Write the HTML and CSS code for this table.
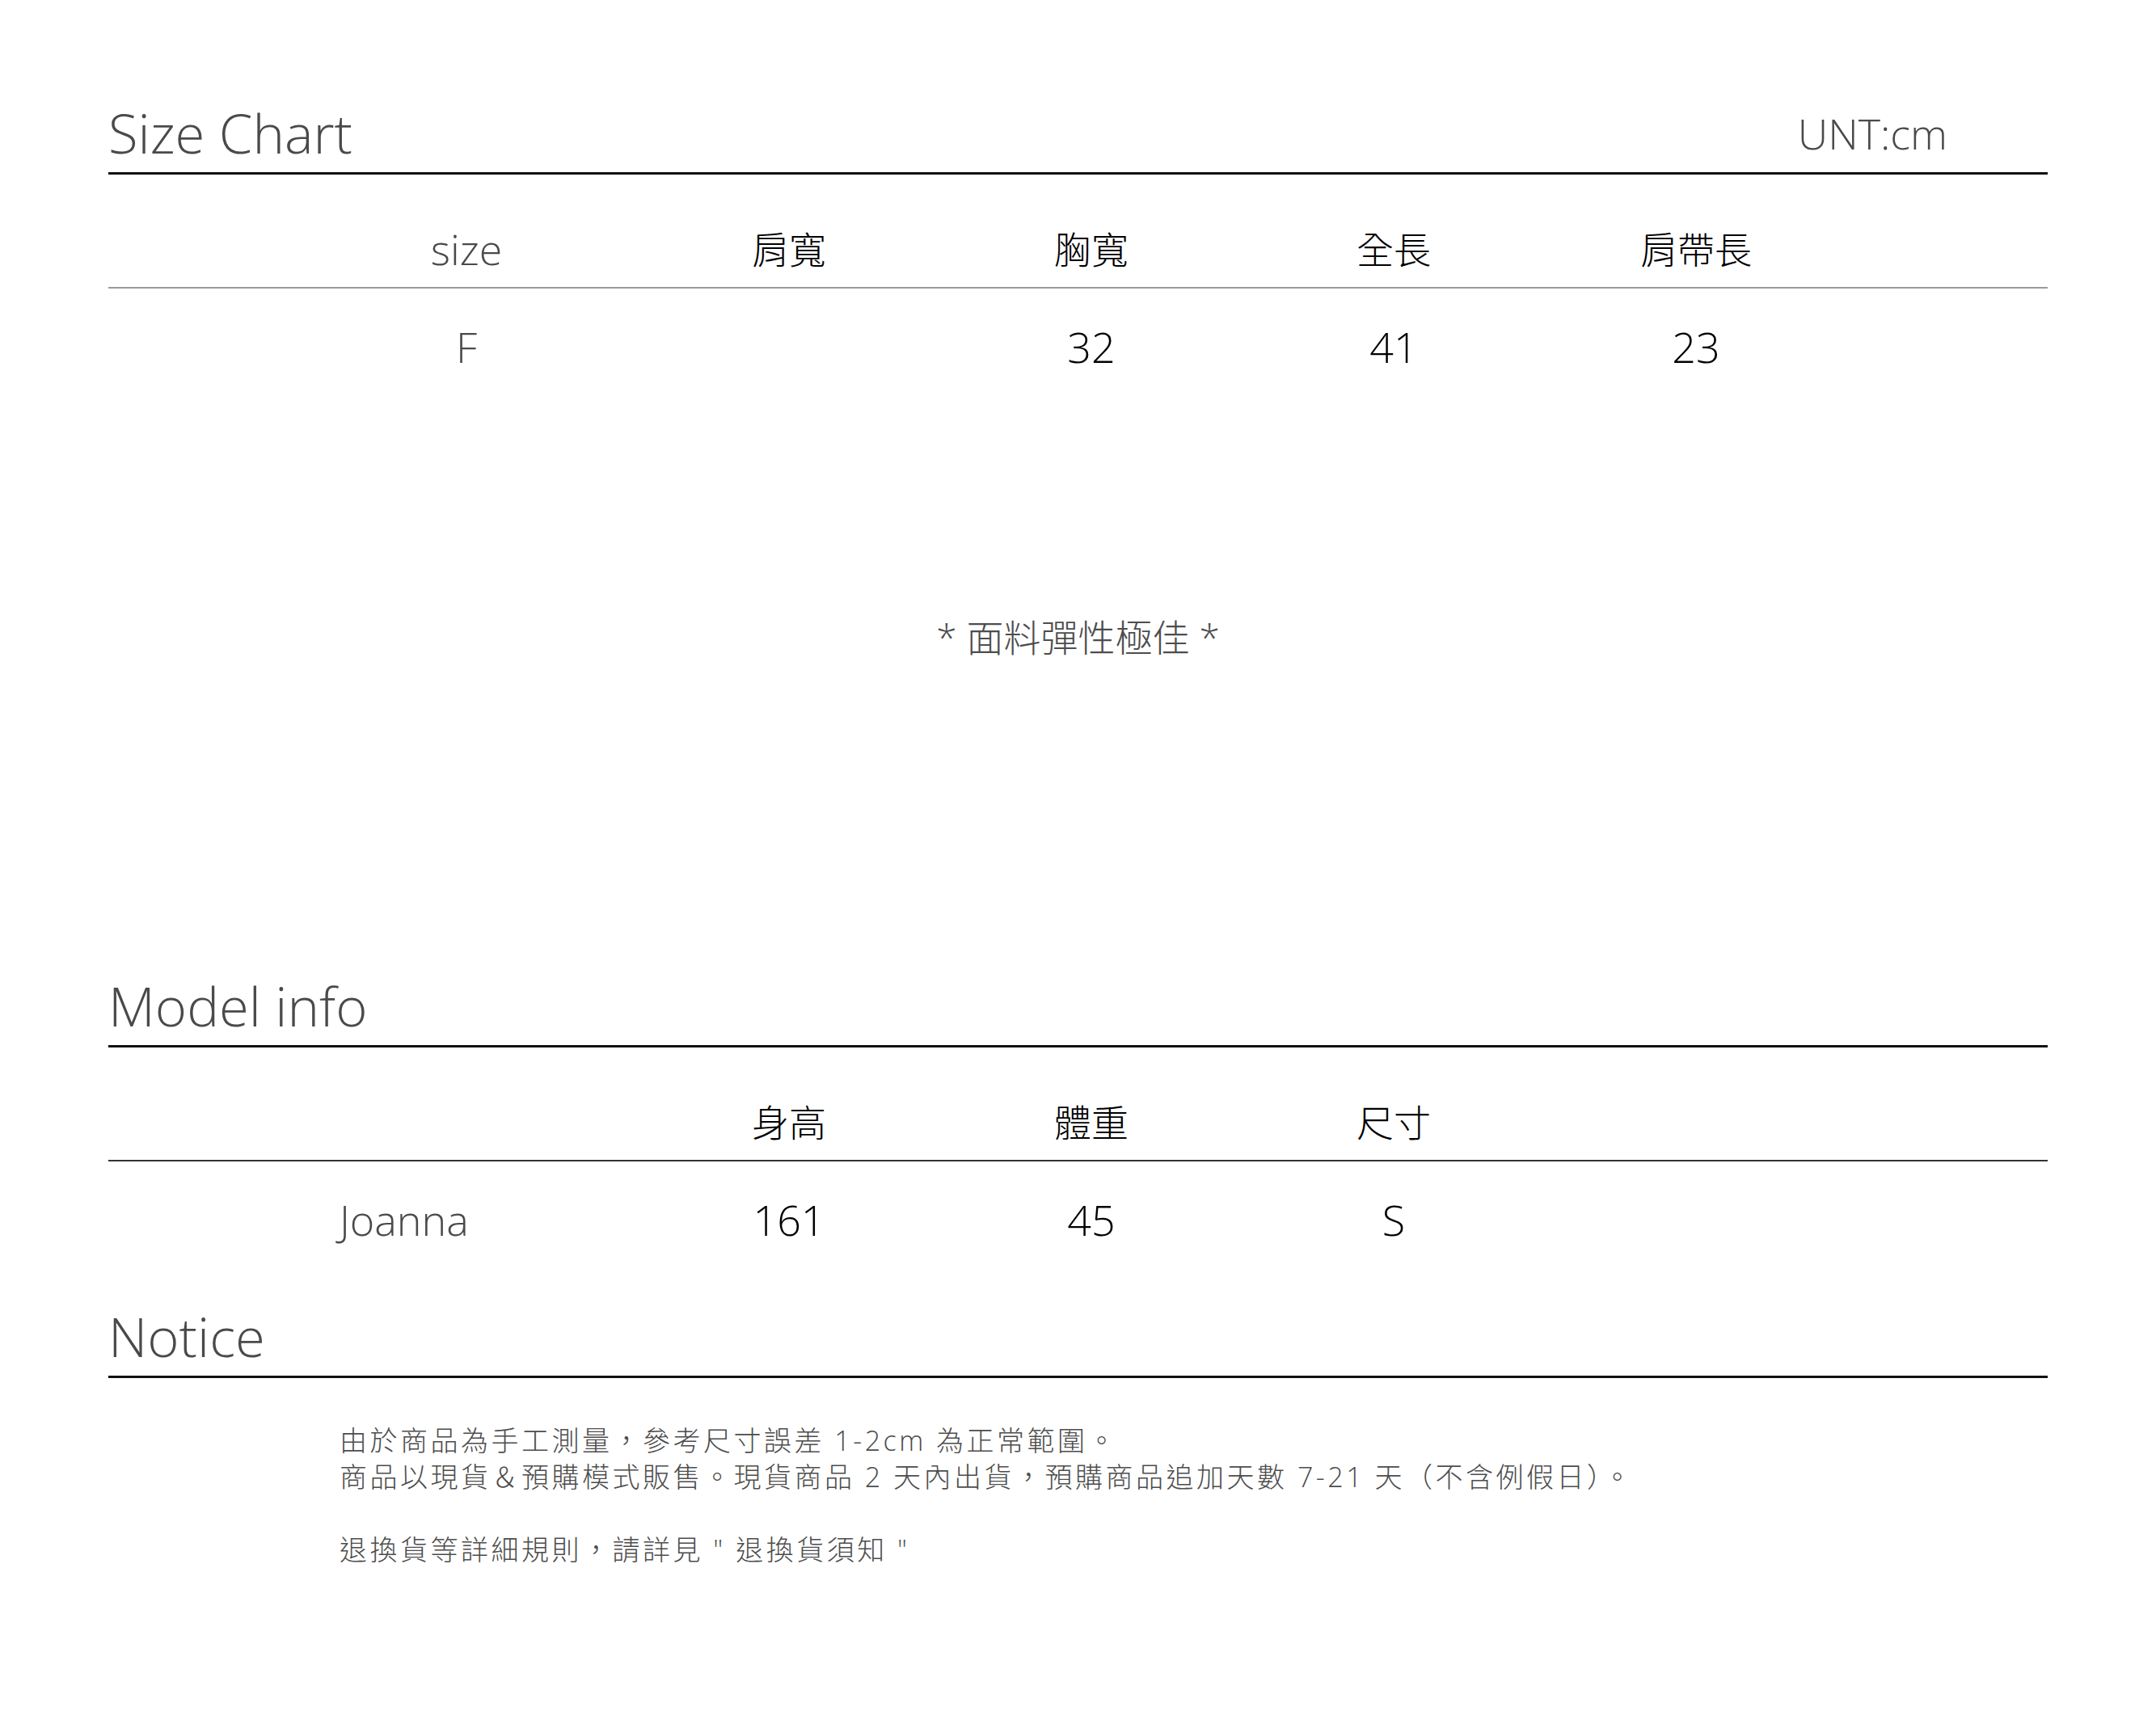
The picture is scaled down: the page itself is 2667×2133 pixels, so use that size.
FILE: index.html
```html
<!DOCTYPE html>
<html lang="zh-TW">
<head>
<meta charset="utf-8">
<title>Size Chart</title>
<link rel="stylesheet" href="styles.css">
</head>
<body>
<div class="page">
  <section class="chart">
    <div class="sec-head">
      <h2 class="sec-title">Size Chart</h2>
      <span class="unit">UNT:cm</span>
    </div>
    <div class="row head">
      <div class="cell first gray latin">size</div>
      <div class="cell">肩寬</div>
      <div class="cell">胸寬</div>
      <div class="cell">全長</div>
      <div class="cell">肩帶長</div>
    </div>
    <div class="row data">
      <div class="cell first gray">F</div>
      <div class="cell"></div>
      <div class="cell">32</div>
      <div class="cell">41</div>
      <div class="cell">23</div>
    </div>
    <p class="note">* 面料彈性極佳 *</p>
  </section>

  <section class="model">
    <div class="sec-head">
      <h2 class="sec-title">Model info</h2>
    </div>
    <div class="row head dark">
      <div class="cell first"></div>
      <div class="cell">身高</div>
      <div class="cell">體重</div>
      <div class="cell">尺寸</div>
    </div>
    <div class="row data">
      <div class="cell first left gray">Joanna</div>
      <div class="cell">161</div>
      <div class="cell">45</div>
      <div class="cell">S</div>
    </div>
  </section>

  <section class="notice">
    <div class="sec-head">
      <h2 class="sec-title">Notice</h2>
    </div>
    <div class="notice-body">
      <p>由於商品為手工測量，參考尺寸誤差 1-2cm 為正常範圍。<br>商品以現貨＆預購模式販售。現貨商品 2 天內出貨，預購商品追加天數 7-21 天（不含例假日）。</p>
      <p>退換貨等詳細規則，請詳見 " 退換貨須知 "</p>
    </div>
  </section>
</div>
</body>
</html>
```

FILE: styles.css
```css
html, body {
  margin: 0;
  padding: 0;
  background: #ffffff;
}

body {
  font-family: "Open Sans", "Noto Sans CJK TC", sans-serif;
  color: #000;
}

.page {
  padding: 124px 134px 0 134px;
}

.sec-head {
  display: flex;
  justify-content: space-between;
  align-items: flex-end;
  padding-bottom: 9px;
  border-bottom: 3px solid #111;
}

.sec-title {
  margin: 0;
  font-size: 67px;
  line-height: 80px;
  font-weight: 350;
  color: #4a4a4a;
}

.unit {
  font-size: 52px;
  line-height: 62px;
  font-weight: 300;
  color: #4a4a4a;
  margin-right: 124px;
  margin-bottom: 8px;
}

.row {
  display: flex;
  align-items: center;
  padding-left: 286px;
  font-size: 52px;
  font-weight: 300;
}

.row.head {
  height: 94px;
  padding-top: 45px;
  border-bottom: 2px solid #9a9a9a;
  font-size: 46px;
  font-weight: 300;
}

.row.head .latin {
  font-size: 52px;
}

.row.head.dark {
  border-bottom-color: #333;
}

.row.data {
  height: 144px;
}

.cell {
  width: 374px;
  text-align: center;
  line-height: 60px;
}

.cell.first {
  width: 314px;
  margin-right: 55px;
}

.cell.left {
  text-align: left;
}

.gray {
  color: #4a4a4a;
}

.note {
  margin: 257px 0 0 0;
  text-align: center;
  font-size: 46px;
  line-height: 60px;
  font-weight: 300;
  color: #4d4d4d;
}

.model {
  margin-top: 386px;
}

.notice {
  margin-top: 32px;
}

.notice-body {
  padding-left: 286px;
  padding-top: 55px;
  font-size: 34px;
  font-weight: 300;
  letter-spacing: 3.5px;
  line-height: 45px;
  color: #4d4d4d;
}

.notice-body p {
  margin: 0 0 45px 0;
}
```
